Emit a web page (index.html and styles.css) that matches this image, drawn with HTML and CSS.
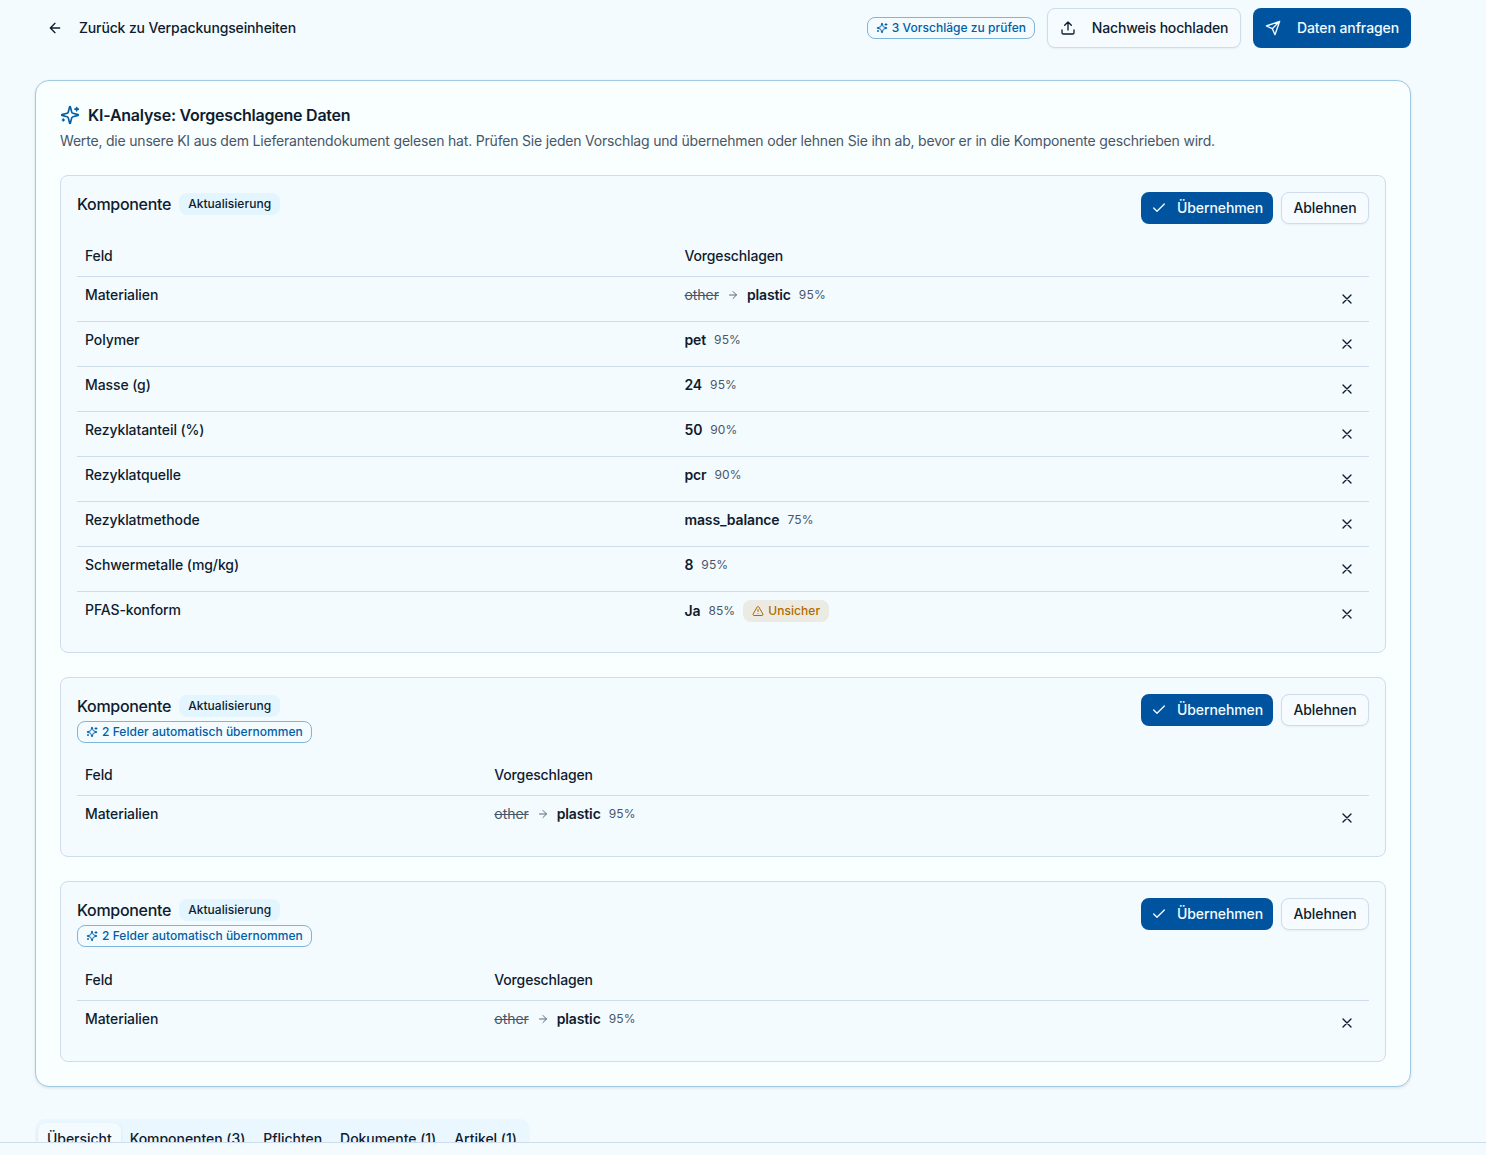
FILE: index.html
```
<!DOCTYPE html>
<html lang="de">
<head>
<meta charset="utf-8">
<title>Verpackungseinheit</title>
<link rel="stylesheet" href="styles.css">
</head>
<body>
<svg class="sprite" aria-hidden="true">
  <symbol id="back" viewBox="0 0 24 24"><path d="m12 19-7-7 7-7M19 12H5"/></symbol>
  <symbol id="arrow" viewBox="0 0 24 24"><path d="M5 12h14M12 5l7 7-7 7"/></symbol>
  <symbol id="sparkles" viewBox="0 0 24 24"><path d="M9.937 15.5A2 2 0 0 0 8.5 14.063l-6.135-1.582a.5.5 0 0 1 0-.962L8.5 9.936A2 2 0 0 0 9.937 8.5l1.582-6.135a.5.5 0 0 1 .963 0L14.063 8.5A2 2 0 0 0 15.5 9.937l6.135 1.581a.5.5 0 0 1 0 .964L15.5 14.063a2 2 0 0 0-1.437 1.437l-1.582 6.135a.5.5 0 0 1-.963 0zM20 3v4M22 5h-4M4 17v2M5 18H3"/></symbol>
  <symbol id="upload" viewBox="0 0 24 24"><path d="M21 15v4a2 2 0 0 1-2 2H5a2 2 0 0 1-2-2v-4M17 8l-5-5-5 5M12 3v12"/></symbol>
  <symbol id="send" viewBox="0 0 24 24"><path d="m22 2-7 20-4-9-9-4ZM22 2 11 13"/></symbol>
  <symbol id="check" viewBox="0 0 24 24"><path d="M20 6 9 17l-5-5"/></symbol>
  <symbol id="x" viewBox="0 0 24 24"><path d="M18 6 6 18M6 6l12 12"/></symbol>
  <symbol id="warn" viewBox="0 0 24 24"><path d="m21.73 18-8-14a2 2 0 0 0-3.48 0l-8 14A2 2 0 0 0 4 21h16a2 2 0 0 0 1.73-3M12 9v4M12 17h.01"/></symbol>
</svg>
<div class="page">
  <header class="topbar">
    <a class="back"><svg class="icon"><use href="#back"/></svg>Zurück zu Verpackungseinheiten</a>
    <div class="actions">
      <span class="badge badge-ai"><svg class="icon"><use href="#sparkles"/></svg>3 Vorschläge zu prüfen</span>
      <button class="btn btn-outline btn-upload"><svg class="icon"><use href="#upload"/></svg>Nachweis hochladen</button>
      <button class="btn btn-primary btn-request"><svg class="icon"><use href="#send"/></svg>Daten anfragen</button>
    </div>
  </header>

  <main class="panel">
    <h1 class="panel-title"><svg class="icon"><use href="#sparkles"/></svg>KI-Analyse: Vorgeschlagene Daten</h1>
    <p class="panel-text">Werte, die unsere KI aus dem Lieferantendokument gelesen hat. Prüfen Sie jeden Vorschlag und übernehmen oder lehnen Sie ihn ab, bevor er in die Komponente geschrieben wird.</p>

    <section class="card">
      <div class="card-head">
        <div class="card-info"><h2 class="card-title">Komponente <span class="badge badge-soft">Aktualisierung</span></h2></div>
        <div class="card-buttons">
          <button class="btn btn-primary btn-accept"><svg class="icon"><use href="#check"/></svg>Übernehmen</button>
          <button class="btn btn-outline btn-reject">Ablehnen</button>
        </div>
      </div>
      <div class="table wide">
        <div class="row row-head"><span>Feld</span><span>Vorgeschlagen</span></div>
        <div class="row"><span>Materialien</span><span class="value"><s>other</s><svg class="icon"><use href="#arrow"/></svg><b>plastic</b><small>95%</small></span><button class="dismiss"><svg class="icon"><use href="#x"/></svg></button></div>
        <div class="row"><span>Polymer</span><span class="value"><b>pet</b><small>95%</small></span><button class="dismiss"><svg class="icon"><use href="#x"/></svg></button></div>
        <div class="row"><span>Masse (g)</span><span class="value"><b>24</b><small>95%</small></span><button class="dismiss"><svg class="icon"><use href="#x"/></svg></button></div>
        <div class="row"><span>Rezyklatanteil (%)</span><span class="value"><b>50</b><small>90%</small></span><button class="dismiss"><svg class="icon"><use href="#x"/></svg></button></div>
        <div class="row"><span>Rezyklatquelle</span><span class="value"><b>pcr</b><small>90%</small></span><button class="dismiss"><svg class="icon"><use href="#x"/></svg></button></div>
        <div class="row"><span>Rezyklatmethode</span><span class="value"><b>mass_balance</b><small>75%</small></span><button class="dismiss"><svg class="icon"><use href="#x"/></svg></button></div>
        <div class="row"><span>Schwermetalle (mg/kg)</span><span class="value"><b>8</b><small>95%</small></span><button class="dismiss"><svg class="icon"><use href="#x"/></svg></button></div>
        <div class="row"><span>PFAS-konform</span><span class="value"><b>Ja</b><small>85%</small><span class="badge badge-warn"><svg class="icon"><use href="#warn"/></svg>Unsicher</span></span><button class="dismiss"><svg class="icon"><use href="#x"/></svg></button></div>
      </div>
    </section>

    <section class="card">
      <div class="card-head">
        <div class="card-info">
          <h2 class="card-title">Komponente <span class="badge badge-soft">Aktualisierung</span></h2>
          <span class="badge badge-ai"><svg class="icon"><use href="#sparkles"/></svg>2 Felder automatisch übernommen</span>
        </div>
        <div class="card-buttons">
          <button class="btn btn-primary btn-accept"><svg class="icon"><use href="#check"/></svg>Übernehmen</button>
          <button class="btn btn-outline btn-reject">Ablehnen</button>
        </div>
      </div>
      <div class="table">
        <div class="row row-head"><span>Feld</span><span>Vorgeschlagen</span></div>
        <div class="row"><span>Materialien</span><span class="value"><s>other</s><svg class="icon"><use href="#arrow"/></svg><b>plastic</b><small>95%</small></span><button class="dismiss"><svg class="icon"><use href="#x"/></svg></button></div>
      </div>
    </section>

    <section class="card">
      <div class="card-head">
        <div class="card-info">
          <h2 class="card-title">Komponente <span class="badge badge-soft">Aktualisierung</span></h2>
          <span class="badge badge-ai"><svg class="icon"><use href="#sparkles"/></svg>2 Felder automatisch übernommen</span>
        </div>
        <div class="card-buttons">
          <button class="btn btn-primary btn-accept"><svg class="icon"><use href="#check"/></svg>Übernehmen</button>
          <button class="btn btn-outline btn-reject">Ablehnen</button>
        </div>
      </div>
      <div class="table">
        <div class="row row-head"><span>Feld</span><span>Vorgeschlagen</span></div>
        <div class="row"><span>Materialien</span><span class="value"><s>other</s><svg class="icon"><use href="#arrow"/></svg><b>plastic</b><small>95%</small></span><button class="dismiss"><svg class="icon"><use href="#x"/></svg></button></div>
      </div>
    </section>
  </main>

  <nav class="tabs">
    <a class="tab active">Übersicht</a><a class="tab">Komponenten (3)</a><a class="tab">Pflichten</a><a class="tab">Dokumente (1)</a><a class="tab">Artikel (1)</a>
  </nav>
</div>
<footer class="bottom-bar"></footer>
</body>
</html>
```
FILE: styles.css
```
* { box-sizing: border-box; margin: 0; }
html, body { height: 1155px; overflow: hidden; }
body {
  background: #f3fbff;
  color: #0f1c2e;
  font: 400 14px/20px Inter, "Liberation Sans", sans-serif;
  letter-spacing: -0.09px;
}
.sprite { display: none; }
.icon {
  width: 16px; height: 16px; flex: none;
  fill: none; stroke: currentColor; stroke-width: 2;
  stroke-linecap: round; stroke-linejoin: round;
}
.page { padding: 8px 75px 0 35px; }

.topbar { display: flex; justify-content: space-between; align-items: center; height: 40px; padding-left: 12px; }
.back { display: flex; align-items: center; gap: 16px; font-weight: 500; letter-spacing: -0.14px; }
.actions { display: flex; align-items: center; gap: 12px; }

.btn {
  display: flex; align-items: center; justify-content: center;
  border: 1px solid transparent; border-radius: 8px; padding: 0;
  font: inherit; font-weight: 500; letter-spacing: inherit; color: inherit; white-space: nowrap;
}
.btn-primary { background: #00539f; color: #f3fbff; }
.btn-outline { background: #f5fbff; border-color: #cedcec; box-shadow: 0 1px 2px rgba(15, 28, 46, .06); }
.btn-upload { width: 194px; height: 40px; gap: 16px; letter-spacing: -0.18px; }
.btn-request { width: 158px; height: 40px; gap: 16px; }
.btn-accept { width: 132px; height: 32px; gap: 10px; }
.btn-reject { width: 88px; height: 32px; }

.badge {
  display: inline-flex; align-items: center; gap: 4px; height: 22px; padding: 0 8px;
  border: 1px solid transparent; border-radius: 8px;
  font-size: 12px; line-height: 16px; font-weight: 500; white-space: nowrap; letter-spacing: 0.03px;
}
.badge .icon { width: 12px; height: 12px; }
.badge-ai { border-color: #80b5d9; color: #005fa6; }
.badge-soft { background: #e3f5ff; letter-spacing: 0.04px; }
.badge-warn { background: #ebeae3; color: #b06a00; letter-spacing: 0.05px; }

.panel {
  margin-top: 32px; padding: 24px; height: 1006.8px;
  border: 1px solid #9fcae2; border-radius: 14px; background: #f9feff;
  box-shadow: 0 1px 3px rgba(15, 28, 46, .12);
}
.panel-title { display: flex; align-items: center; gap: 8px; height: 20px; font-size: 16px; font-weight: 600; letter-spacing: -0.23px; }
.panel-title .icon { width: 20px; height: 20px; color: #005fa6; }
.panel-text { margin: 6px 0 24px; color: #485668; letter-spacing: -0.193px; }

.card { border: 1px solid #cedcec; border-radius: 8px; background: #f4fbff; padding: 16px; }
.card + .card { margin-top: 24px; }
.card-head { display: flex; justify-content: space-between; align-items: flex-start; }
.card-info { display: flex; flex-direction: column; align-items: flex-start; gap: 3px; }
.card-info > .badge { margin-bottom: 0.4px; }
.card-title { display: flex; align-items: center; gap: 8px; height: 24px; font-size: 16px; font-weight: 500; letter-spacing: -0.3px; }
.card-buttons { display: flex; gap: 8px; }

.table { margin-top: 12px; }
.row {
  display: grid; grid-template-columns: 409.3px 1fr 28px;
  padding: 8px; height: 45px; border-bottom: 1px solid #cedcec; font-weight: 500; letter-spacing: -0.1px;
}
.wide .row { grid-template-columns: 599.5px 1fr 28px; }
.row:last-child { height: 44px; border-bottom: 0; }
.row-head { height: 41px; align-items: center; letter-spacing: -0.15px; }
.value { display: flex; align-items: center; gap: 8px; align-self: start; }
.value > .icon { width: 12px; height: 12px; color: #5b6879; }
.value s { font-weight: 400; color: #485668; letter-spacing: -0.05px; }
.value b { font-weight: 600; letter-spacing: -0.14px; }
.value small { font-size: 12px; font-weight: 400; color: #485668; letter-spacing: .14px; }
.dismiss {
  display: flex; align-items: center; justify-content: center;
  width: 28px; height: 28px; padding: 0; border: 0; background: none; color: inherit;
}

.tabs {
  display: flex; width: 495px; height: 40px; margin-top: 32px; padding: 4px 3px;
  border-radius: 10px; background: #eaf7ff;
}
.tab { padding: 6px 9px; border-radius: 8px; font-weight: 500; letter-spacing: -0.04px; white-space: nowrap; }
.tab.active { background: #f4fbff; box-shadow: 0 1px 3px rgba(15, 28, 46, .1); }
.bottom-bar {
  position: fixed; left: 0; right: 0; bottom: 0; height: 13px;
  border-top: 1px solid #cedcec; background: rgba(243, 251, 255, .95); backdrop-filter: blur(8px);
}
```
